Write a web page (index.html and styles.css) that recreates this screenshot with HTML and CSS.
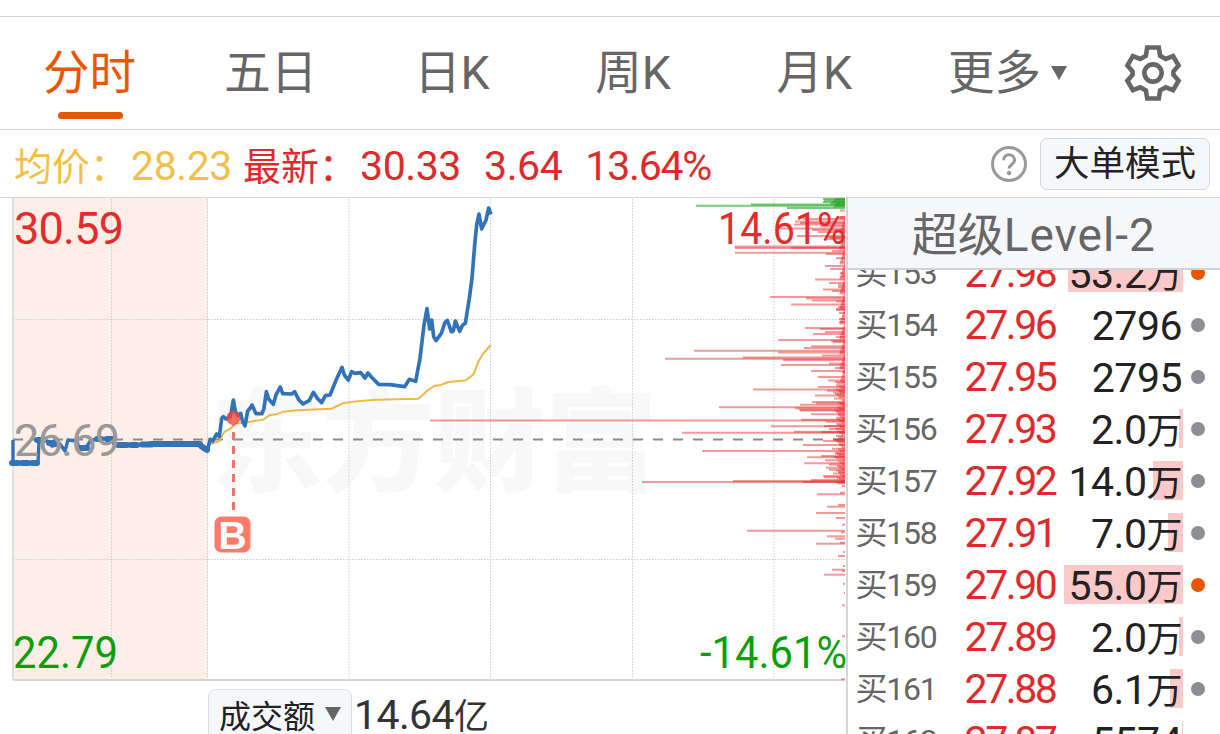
FILE: index.html
```
<!DOCTYPE html>
<html lang="zh-CN">
<head>
    <meta charset="UTF-8">
    <meta name="viewport" content="width=device-width, initial-scale=1.0">
    <title>分时</title>
    <link rel="stylesheet" href="styles.css">
</head>
<body>
    <nav class="tabs">
        <a class="tab active">分时</a>
        <a class="tab">五日</a>
        <a class="tab">日K</a>
        <a class="tab">周K</a>
        <a class="tab">月K</a>
        <a class="more">更多<i class="arrow"></i></a>
        <svg class="gear" viewBox="0 0 60 60" width="60" height="60">
            <path d="M24.2 4.5h11.6l1.3 8.2 5.7 3.2 7.3-2.8 5.5 9.4-5.2 6v3.2l5.2 6-5.5 9.4-7.3-2.8-5.7 3.2-1.3 8H24.2l-1.3-8-5.7-3.2-7.3 2.8-5.5-9.4 5.2-6v-3.2l-5.2-6 5.5-9.4 7.3 2.8 5.7-3.2z"/>
            <circle cx="30" cy="30" r="8.6"/>
        </svg>
    </nav>

    <div class="info">
        <span class="avg">均价：<b>28.23</b></span>
        <span class="last">最新：<b>30.33</b><b>3.64</b><b>13.64%</b></span>
        <svg class="help" viewBox="0 0 38 38" width="38" height="38">
            <circle cx="19" cy="19" r="16.5"/>
            <path d="M13.6 15.2c0-7.2 11-7.2 11 0 0 4-5.5 4.2-5.5 8.4"/>
            <circle class="dot" cx="19.1" cy="28" r="2.2"/>
        </svg>
        <button class="mode">大单模式</button>
    </div>

    <div class="main">
        <div class="left">
            <svg class="chart" viewBox="0 198 846 484" width="846" height="484">
                <rect class="pre" x="13" y="198" width="195" height="482"/>
                <text class="mark" x="211" y="483" textLength="446">东方财富</text>
                <path class="grid" d="M111.5 199V680M207.5 199V680M349 199V680M490.5 199V680M632.5 199V680M774 199V680M13 319.5H845M13 559.5H845"/>
                <path class="frame" d="M13 198V680"/>
                <path class="frame bottom" d="M13 680H845"/>
                <path class="base" d="M13 439.5H845"/>
                <g id="bars"></g>
                <g transform="translate(200 195) scale(.33333)">
                    <polyline class="avg-line" points="22,752 40,744 58,738 72,712 95,698 105,685 125,684 150,680 190,674 210,660 230,658 250,650 290,646 395,641 430,624 480,618 530,614 655,611 668,600 680,588 703,573 722,570 745,561 797,556 812,545 822,535 835,500 848,478 872,450"/>
                    <polyline class="price-line" points="0,746 10,762 23,765 30,733 38,738 50,717 58,725 65,670 70,665 78,672 90,665 94,650 100,615 106,650 115,662 122,655 128,680 135,693 143,648 150,640 156,630 168,656 186,656 192,640 199,590 206,612 220,628 228,600 241,576 248,596 275,597 284,590 296,614 309,627 328,616 340,592 352,610 365,623 376,602 390,600 408,556 426,517 433,540 445,555 455,530 465,535 482,533 495,549 504,534 514,546 536,568 570,569 614,575 628,553 647,559 660,490 672,390 681,341 689,402 695,375 701,425 708,437 724,415 735,382 742,376 754,410 760,408 766,378 779,409 788,390 796,385 808,310 816,250 824,150 830,90 837,57 845,102 858,75 866,39 873,58"/>
                </g>
                <polyline class="price-line pre-line" points="13,440 13,463 38,463 39,440 47,441 52,446 60,444 65,451 68,440 77,441 79,449 87,446 91,440 110,438 114,444 140,445 150,444 198,444 207,450"/>
                <path class="dots" d="M12 463h6M22 463h6M32 463h5M37 440h3M49 443h5M80 448h7M97 439h4M107 439h5M118 445h9M131 445h6M142 444.5h10M150 444h50M201 446l6 4"/>
                <circle class="buy-dot" cx="233.3" cy="418" r="7"/>
                <path class="buy-line" d="M233.5 418V511"/>
                <rect class="buy-box" x="214.5" y="516.5" width="36" height="36" rx="7"/>
                <text class="buy-text" x="232.5" y="548.5">B</text>
                <text class="label up" x="14" y="243.5" textLength="110">30.59</text>
                <text class="label flat" x="14" y="455.5" textLength="106">26.69</text>
                <text class="label down" x="13" y="668" textLength="105" lengthAdjust="spacingAndGlyphs">22.79</text>
                <text class="label up" x="718" y="243.5" textLength="128" lengthAdjust="spacingAndGlyphs">14.61%</text>
                <text class="label down" x="700" y="668" textLength="147" lengthAdjust="spacingAndGlyphs">-14.61%</text>
            </svg>
            <div class="volume">
                <span class="select">成交额<i class="arrow"></i></span>
                <span class="total">14.64<small>亿</small></span>
            </div>
        </div>

        <div class="level2">
            <h2>超级<span>Level-2</span></h2>
            <div class="orders" id="orders"></div>
        </div>
    </div>

    <script>
        // [序号, 价格, 数量, 底色宽度, 是否大单]
        const orders = [
            [153, '27.98', '53.2万', 115, true],
            [154, '27.96', '2796', 0, false],
            [155, '27.95', '2795', 0, false],
            [156, '27.93', '2.0万', 4, false],
            [157, '27.92', '14.0万', 30, false],
            [158, '27.91', '7.0万', 15, false],
            [159, '27.90', '55.0万', 119, true],
            [160, '27.89', '2.0万', 4, false],
            [161, '27.88', '6.1万', 13, false],
            [162, '27.87', '5574', 1, false]
        ];
        document.getElementById('orders').innerHTML = orders.map(function(o) {
            return '<div class="order"><span class="no">买' + o[0] + '</span>' +
                '<span class="price">' + o[1] + '</span>' +
                '<span class="qty"><i class="bar" style="width:' + o[3] + 'px"></i><em>' +
                o[2].replace('万', '<small>万</small>') + '</em></span>' +
                '<i class="point' + (o[4] ? ' big' : '') + '"></i></div>';
        }).join('');

        // 挂单分布: y, 左端 x
        const sell = [[199,823],[200.5,824],[202,823],[203.5,830],[204.5,751],[205.7,696],[208,787]];
        // 顶部右侧叠加的小单
        for (let y = 199; y < 208; y += 1.5) {
            sell.push([y, 832 + (y * 3 % 6)]);
        }
        const buy = [
            [210.5,840],[217,838],[219,803],[221.5,795],[223,800],[224.5,794],[226,820],[228.5,780],[230,812],[232,818],
            [236,797],[237,825],[238,830],[239,825],[241.5,838],[246.5,734.5],[247.7,791],[248,735],[252.7,735],[251,832],[254,826],
            [258,836],[266,825],[269,830],[273,840],[276,842],[279.5,815],[283,829],[285,838],[287,838],[289.5,823],
            [291,832],[297,770],[298.5,806],[300.5,812],[301.5,836],[304.5,791],[307,838],[309,836],[310,836],[313,839],
            [319,839],[322,839],[328,805],[329,820],[332,825],[334,813],[337,836],[340,778],[341,831],[342,833],[346.3,811],
            [348,804],[350.7,694],[352.5,778],[355.5,822],[357.5,743],[358.7,665],[360,783],[363.5,829],[365,781],[368,835],
            [371,811],[372,842],[377,818],[380.5,828],[382,842],[385.5,836],[387,818],[389.5,753],[390.7,827],[392.5,833],
            [395.5,815],[402,812],[403.3,816],[404.7,800],[407.3,719],[408.3,795],[409.7,799],[410.5,800],[414.3,811],
            [417.7,836],[419.7,801],[420.5,430],[421.7,826],[426.3,771],[426,824],[429,829],[431.7,794],[432.7,682],[432,821],
            [439.3,833],[441,823],[445,803],[448.7,832],[451,702],[453.7,835],[456,821],[457.3,807],[460.3,825],[463.3,804],
            [464.5,829],[467.7,826],[469.7,829],[472.7,839],[476,823],[477.3,824],[480,811],[481,733],[482,642],[482,803],
            [483.3,838],[486,842],[492.7,840],[494.3,817],[505,838],[506.7,827],[513,816],[518,836],[524.7,842],[530.7,747],
            [532.3,841],[536.3,827],[538.7,835],[542.7,840],[543.7,816],[552,843],[556,838],[566,843],[569.7,832],[571,842],
            [574.7,824],[583.7,843],[593,844],[605.3,842],[636.3,842],[667,842],[679.3,841]
        ];
        // 靠右的零散小单
        for (let y = 217; y < 484; y += 1.5) {
            buy.push([y, 844 - (y * 7 % 5) - (y > 380 ? y * 3 % 7 : 0)]);
        }
        function lines(list, cls) {
            return list.map(function(d) {
                return '<path class="' + cls + '" d="M' + d[1] + ' ' + d[0] + 'H845"/>';
            }).join('');
        }
        document.getElementById('bars').innerHTML = lines(sell, 'sell') + lines(buy, 'buy');
    </script>
</body>
</html>
```
FILE: styles.css
```
*{
    box-sizing: border-box;
}
body{
    margin: 0;
    height: 734px;
    overflow: hidden;
    background-color: #fff;
    color: #222;
    font-family: Roboto, "Noto Sans CJK SC", sans-serif;
}
b, i, em{
    font-weight: 400;
    font-style: normal;
}
.tabs{
    display: flex;
    align-items: center;
    height: 114px;
    margin-top: 16px;
    border-top: 1px solid #d6d6d6;
    border-bottom: 1px solid #d6d6d6;
    font-size: 46.5px;
    line-height: 114px;
    color: #666;
}
.tab{
    position: relative;
    width: 181.2px;
    padding-right: 2px;
    text-align: center;
}
.active{
    color: #e95500;
}
.active::after{
    content: "";
    position: absolute;
    left: 58px;
    bottom: 11px;
    width: 65px;
    height: 7px;
    border-radius: 4px;
    background-color: #e95500;
}
.more{
    display: flex;
    align-items: center;
    width: 217.5px;
    padding-left: 42px;
}
.arrow{
    margin-left: 10px;
    border: 8px solid transparent;
    border-top: 14px solid #666;
    border-bottom: 0;
}
.gear{
    fill: none;
    stroke: #666;
    stroke-width: 4.6;
}
.info{
    display: flex;
    align-items: center;
    height: 68px;
    padding: 0 10px 0 14px;
    border-bottom: 1px solid #d6d6d6;
    font-size: 38px;
    white-space: nowrap;
}
.info b{
    position: relative;
    top: 0;
    font-size: 41px;
    letter-spacing: -.4px;
}
.info b:first-child{
    margin-left: 3px;
}
.avg{
    width: 229px;
    color: #f4bf48;
}
.last{
    color: #df2a2a;
}
.last b{
    margin-right: 23px;
}
.last b:last-child{
    letter-spacing: -1.2px;
}
.help{
    margin-left: auto;
    fill: none;
    stroke: #999;
    stroke-width: 3;
}
.help .dot{
    fill: #999;
    stroke: none;
}
.mode{
    width: 170px;
    height: 52px;
    margin-left: 12px;
    padding: 0;
    border: 1px solid #d5d8dc;
    border-radius: 7px;
    background-color: #f6f7fa;
    color: #222;
    font-family: inherit;
    font-size: 35.5px;
    line-height: 50px;
}
.main{
    display: flex;
    height: 536px;
}
.left{
    flex: none;
    width: 845.5px;
}
.chart{
    display: block;
}
.pre{
    fill: #fdeee7;
}
.mark{
    fill: #f8f8f8;
    font-size: 112px;
    font-weight: 900;
}
.grid{
    fill: none;
    stroke: #ccc;
    stroke-dasharray: 1.5 1.5;
}
.frame{
    stroke: #d6d6d6;
    stroke-width: 1.5;
}
.bottom{
    stroke-width: 2;
}
.base{
    stroke: #8b8b8b;
    stroke-width: 2;
    stroke-dasharray: 10 10;
}
.avg-line{
    fill: none;
    stroke: #efba43;
    stroke-width: 6;
}
.price-line{
    fill: none;
    stroke: #3273b8;
    stroke-width: 11;
    stroke-linejoin: round;
}
.pre-line{
    stroke-width: 3.4;
}
.dots{
    fill: none;
    stroke: #3273b8;
    stroke-width: 6;
    stroke-linecap: round;
}
.sell{
    stroke: #22a522;
    stroke-opacity: .6;
    stroke-width: 2;
}
.buy{
    stroke: #e52a2a;
    stroke-opacity: .48;
    stroke-width: 2;
}
.buy-dot{
    fill: #f94435;
    fill-opacity: .8;
}
.buy-line{
    stroke: #ed7567;
    stroke-width: 3;
    stroke-dasharray: 8 6;
}
.buy-box{
    fill: #fe7b6b;
}
.buy-text{
    fill: #fff;
    font-family: "Liberation Sans", sans-serif;
    font-size: 39px;
    font-weight: 700;
    text-anchor: middle;
}
.label{
    font-size: 45px;
}
.up{
    fill: #e52b2b;
}
.flat{
    fill: #999;
}
.down{
    fill: #0a9f0a;
}
.volume{
    display: flex;
    height: 52px;
    padding: 7px 0 0 208px;
    font-size: 32px;
    color: #222;
}
.select{
    display: flex;
    align-items: center;
    width: 144px;
    height: 52px;
    padding: 0 0 3px 10px;
    border: 1px solid #dcdee2;
    border-radius: 8px;
    background-color: #f6f7fa;
}
.total{
    margin-left: 2px;
    font-size: 41px;
    letter-spacing: -.6px;
    line-height: 52px;
    color: #333;
}
.total small{
    font-size: 35px;
}
.level2{
    flex: 1;
    border-left: 2px solid #d6d6d6;
}
.level2 h2{
    height: 72px;
    margin: 0;
    border-bottom: 2px solid #d0d3d7;
    background-color: #f6f7fa;
    text-align: center;
    font-size: 46px;
    font-weight: 400;
    line-height: 75px;
    color: #666;
}
.level2 h2 span{
    letter-spacing: 1px;
}
.orders{
    height: 464px;
    overflow: hidden;
}
.order{
    display: flex;
    align-items: center;
    height: 52px;
    padding-left: 8px;
    font-size: 41px;
    line-height: 54px;
}
.order:first-child{
    margin-top: -23px;
}
.no{
    width: 84px;
    font-size: 32px;
    letter-spacing: -1.2px;
    color: #666;
}
.price{
    width: 116px;
    text-align: right;
    letter-spacing: -2.4px;
    color: #df2a2a;
}
.qty{
    position: relative;
    width: 127.5px;
    height: 52px;
    text-align: right;
    letter-spacing: -.5px;
}
.qty em{
    position: relative;
    right: 1px;
}
.qty small{
    font-size: 36px;
}
.bar{
    position: absolute;
    top: 6px;
    right: 0;
    height: 39px;
    background-color: #fbc9c9;
}
.point{
    width: 14px;
    height: 14px;
    margin-left: 8px;
    border-radius: 50%;
    background-color: #8e8d94;
}
.point.big{
    background-color: #e95500;
}
```
